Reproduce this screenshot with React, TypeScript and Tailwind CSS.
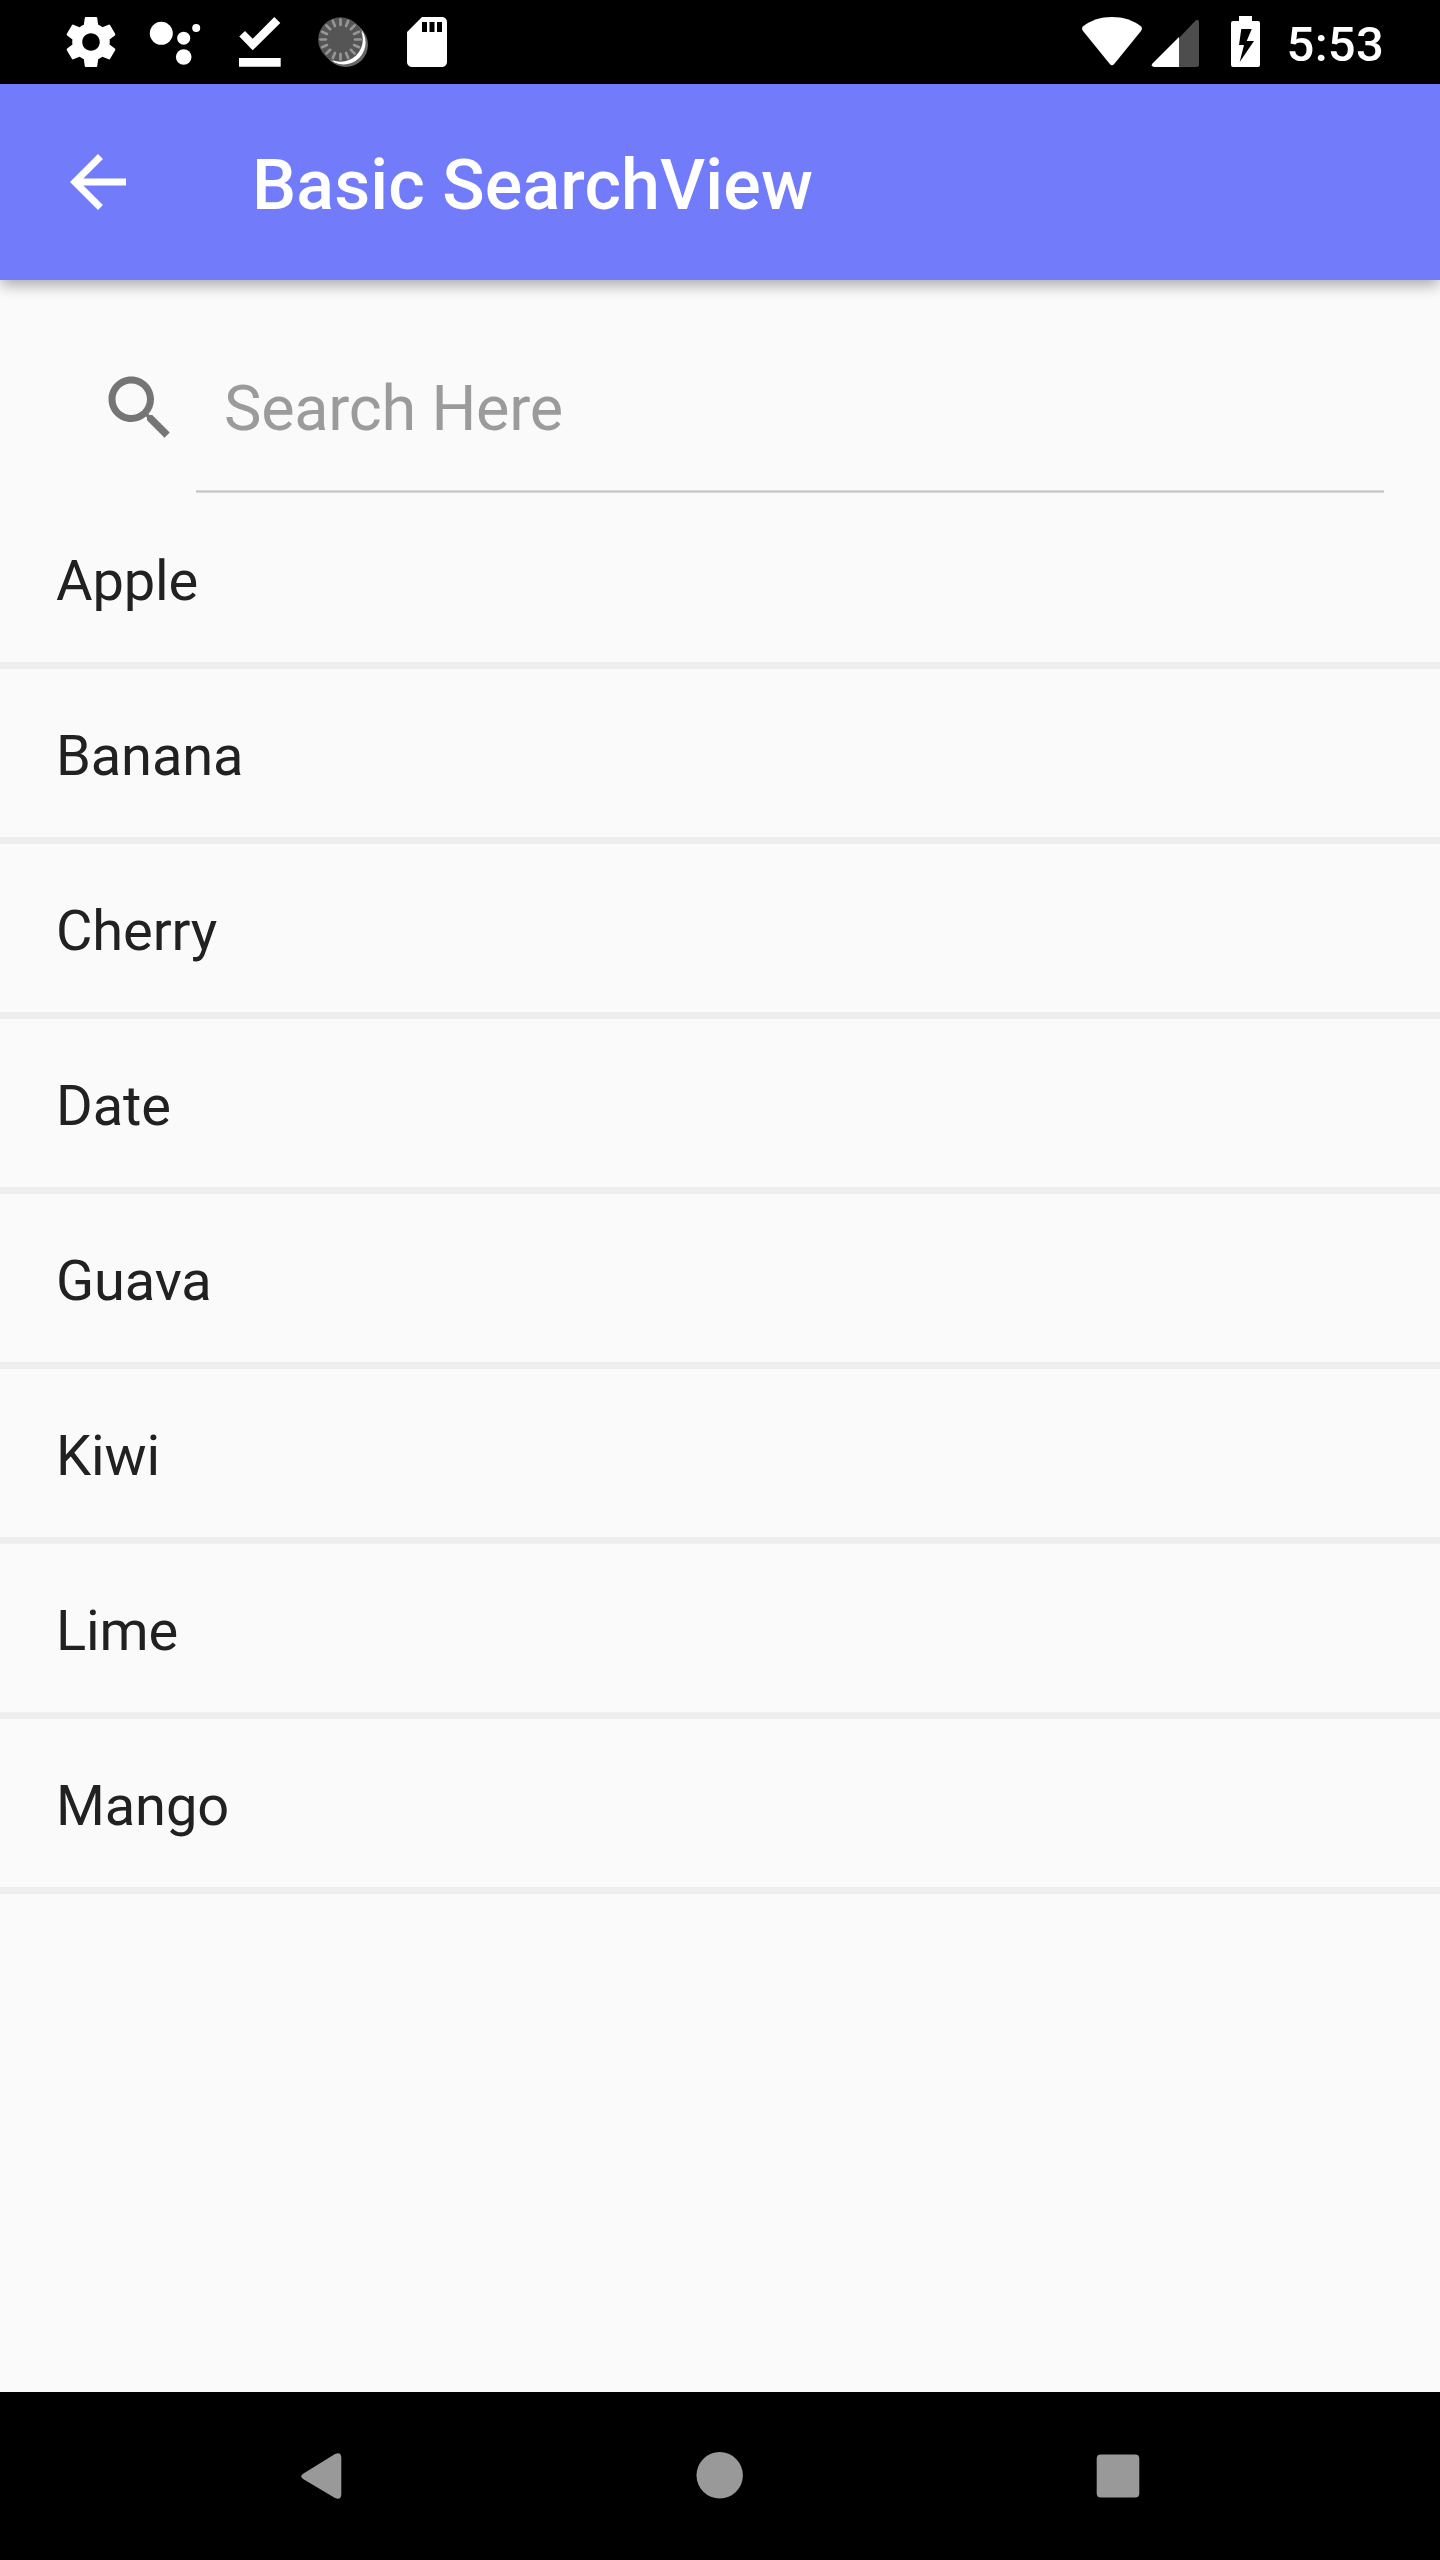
import React from "react";

const fruits = ["Apple", "Banana", "Cherry", "Date", "Guava", "Kiwi", "Lime", "Mango"];

const ticks = Array.from({ length: 16 }, (_, i) => i * 22.5);

function StatusBar() {
  return (
    <div className="flex h-[84px] items-center bg-black pl-[61px] pr-[56px] text-white">
      <div className="flex gap-6">
        <svg viewBox="0 0 24 24" className="size-[60px]" fill="currentColor">
          <path d="M19.43 12.98c.04-.32.07-.64.07-.98s-.03-.66-.07-.98l2.11-1.65c.19-.15.24-.42.12-.64l-2-3.46c-.12-.22-.39-.3-.61-.22l-2.49 1c-.52-.4-1.08-.73-1.69-.98l-.38-2.65C14.46 2.18 14.25 2 14 2h-4c-.25 0-.46.18-.49.42l-.38 2.65c-.61.25-1.17.59-1.69.98l-2.49-1c-.23-.09-.49 0-.61.22l-2 3.46c-.13.22-.07.49.12.64l2.11 1.65c-.04.32-.07.65-.07.98s.03.66.07.98l-2.11 1.65c-.19.15-.24.42-.12.64l2 3.46c.12.22.39.3.61.22l2.49-1c.52.4 1.08.73 1.69.98l.38 2.65c.03.24.24.42.49.42h4c.25 0 .46-.18.49-.42l.38-2.65c.61-.25 1.17-.59 1.69-.98l2.49 1c.23.09.49 0 .61-.22l2-3.46c.12-.22.07-.49-.12-.64l-2.11-1.65zM12 15.5c-1.93 0-3.5-1.57-3.5-3.5s1.57-3.5 3.5-3.5 3.5 1.57 3.5 3.5-1.57 3.5-3.5 3.5z" />
        </svg>
        <svg viewBox="0 0 60 60" className="size-[60px]" fill="currentColor">
          <circle cx="16.3" cy="21.3" r="11.5" />
          <circle cx="38.7" cy="26.2" r="6.5" />
          <circle cx="51.2" cy="16.1" r="4" />
          <circle cx="38.7" cy="45" r="7.8" />
        </svg>
        <svg viewBox="0 0 60 60" className="size-[60px]" fill="currentColor">
          <path d="M10.3 24.6 16 19l7.7 7.8L45.3 5.1l6 5.9-27.6 27.3zM10 46h41.7v8.8H10z" />
        </svg>
        <svg viewBox="0 0 60 60" className="size-[60px]">
          <circle cx="32.7" cy="32.7" r="22.3" fill="#666" />
          <circle cx="30.6" cy="30.4" r="22" fill="#fff" />
          <path d="M11.7 43.3 16.5 48.1a22.3 22.3 0 0 0 5 1.5zM43.3 11.7 48.1 16.5a22.3 22.3 0 0 1 1.5 5z" fill="#555" />
          <circle cx="27.5" cy="27.5" r="22.3" fill="#555" />
          <g stroke="#969696" strokeWidth="2.7" strokeLinecap="round">
            {ticks.map((a) => (
              <path key={a} d="M27.5 7.5v5.4" transform={`rotate(${a} 27.5 27.5)`} />
            ))}
          </g>
        </svg>
        <svg viewBox="0 0 24 24" className="size-[60px]" fill="currentColor">
          <path d="M18 2h-8L4.02 8 4 20c0 1.1.9 2 2 2h12c1.1 0 2-.9 2-2V4c0-1.1-.9-2-2-2zm-6 6h-2V4h2v4zm3 0h-2V4h2v4zm3 0h-2V4h2v4z" />
        </svg>
      </div>
      <div className="ml-auto flex items-center">
        <svg viewBox="0 0 60 60" className="h-[60px] w-[60px]" fill="currentColor">
          <path d="M1.2 14.2C9 8.2 19 5 30 5s21 3.2 28.8 9.2Q60.9 16.2 59 19L32.2 52Q30 54.6 27.8 52L1 19Q-.9 16.2 1.2 14.2z" />
        </svg>
        <svg viewBox="0 0 50 60" className="ml-[9px] h-[60px] w-[50px]" fill="currentColor">
          <path d="M44.6 8.5Q48 6.5 48 10.500V52.5Q48 55 45.5 55H28V26z" fill="#4d4d4d" />
          <path d="M28 25v30H3Q-.5 54.5 1.5 51.5z" />
        </svg>
        <svg viewBox="0 0 29 60" className="ml-[30px] h-[60px] w-[29px]" fill="currentColor" fillRule="evenodd">
          <path d="M8 4h13v5h6q2 0 2 2v42q0 2-2 2H2q-2 0-2-2V11q0-2 2-2h6zM10.3 17 8 33h5L8.7 50 23 29h-7.3L20.7 17z" />
        </svg>
        <span className="ml-[27px] pt-[6px] text-[49px] font-medium leading-[60px] tracking-[0.25px]">5:53</span>
      </div>
    </div>
  );
}

function AppBar() {
  return (
    <header className="relative z-10 flex h-[196px] items-center bg-[#727cfb] pl-14 text-white shadow-[0_6px_14px_-1px_rgba(0,0,0,0.33)]">
      <svg viewBox="0 0 24 24" className="size-[84px]" fill="currentColor">
        <path d="M20 11H7.83l5.59-5.59L12 4l-8 8 8 8 1.41-1.41L7.83 13H20v-2z" />
      </svg>
      <h1 className="ml-28 pt-[6px] text-[70px] font-medium leading-[84px] tracking-[0.1px]">Basic SearchView</h1>
    </header>
  );
}

function SearchField() {
  return (
    <div className="flex h-[214px] pl-[98px] pr-14">
      <svg viewBox="0 0 24 24" className="mt-[85.5px] size-[84px] shrink-0" fill="#757575">
        <path d="M15.5 14h-.79l-.28-.27C15.41 12.59 16 11.11 16 9.5 16 5.91 13.09 3 9.5 3S3 5.91 3 9.5 5.91 16 9.5 16c1.61 0 3.09-.59 4.23-1.57l.27.28v.79l5 4.99L20.49 19l-4.99-5zm-6 0C7.01 14 5 11.99 5 9.5S7.01 5 9.5 5 14 7.01 14 9.5 11.99 14 9.5 14z" />
      </svg>
      <div className="ml-[14px] flex h-[213px] flex-1 flex-col">
        <div className="flex-1 pl-7 pt-[92px] text-[63px] leading-[74px] tracking-[-0.25px] text-[#9b9b9b]">Search Here</div>
        <div className="h-[3px] shrink-0 border-y border-[#d8d8d8] bg-[#c4c4c4]" />
      </div>
    </div>
  );
}

function NavBar() {
  return (
    <nav className="flex h-[168px] items-center justify-between bg-black px-[287px]">
      <svg viewBox="0 0 70 70" className="size-[70px]" fill="#999">
        <path d="M16.5 32.5 48 13Q54.3 10.3 54.3 17V53Q54.3 59.7 48 57L16.5 38.3Q11.8 35.4 16.5 32.5z" />
      </svg>
      <svg viewBox="0 0 70 70" className="size-[70px]" fill="#999">
        <circle cx="34.7" cy="34.3" r="23.2" />
      </svg>
      <svg viewBox="0 0 70 70" className="size-[70px]" fill="#999">
        <rect x="13.7" y="13.5" width="42.6" height="43" rx="4" />
      </svg>
    </nav>
  );
}

export default function App() {
  return (
    <div className="flex h-[2560px] w-[1440px] flex-col bg-[#fafafa] font-[Roboto,sans-serif]">
      <StatusBar />
      <AppBar />
      <main className="flex-1">
        <SearchField />
        <ul>
          {fruits.map((fruit) => (
            <li
              key={fruit}
              className="flex h-[175px] items-center border-b-[7px] border-[#eee] px-14 pt-[6px] text-[56px] leading-[66px] tracking-[-0.12px] text-[#212121]"
            >
              {fruit}
            </li>
          ))}
        </ul>
      </main>
      <NavBar />
    </div>
  );
}
